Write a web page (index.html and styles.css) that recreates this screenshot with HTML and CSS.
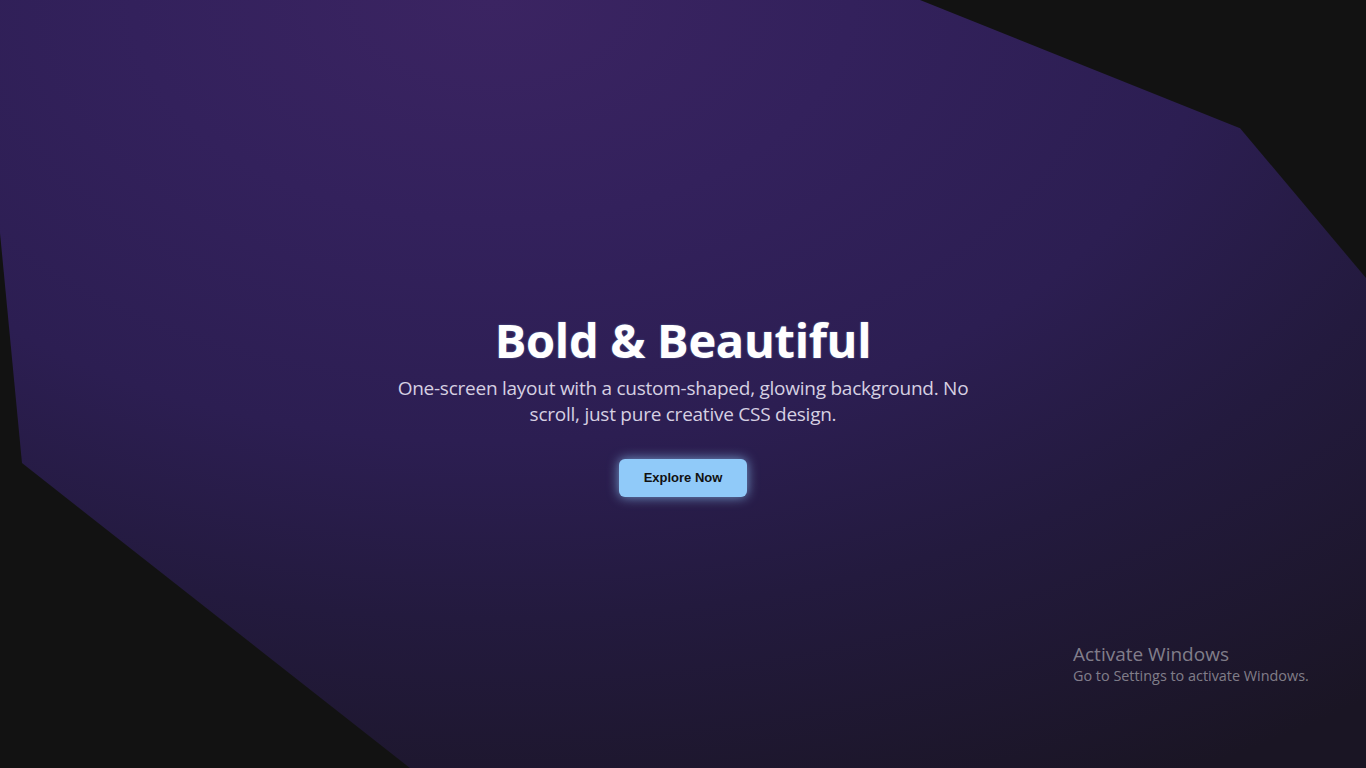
FILE: index.html
```html
<!DOCTYPE html>
<html lang="en">
<head>
<meta charset="utf-8">
<title>Bold &amp; Beautiful</title>
<link rel="stylesheet" href="styles.css">
</head>
<body>
<div class="shape"></div>
<main class="hero">
  <h1 class="title">Bold &amp; Beautiful</h1>
  <p class="lead">One-screen layout with a custom-shaped, glowing background. No scroll, just pure creative CSS design.</p>
  <button class="cta">Explore Now</button>
</main>
<div class="watermark">
  <div class="wm-title">Activate Windows</div>
  <div class="wm-sub">Go to Settings to activate Windows.</div>
</div>
</body>
</html>
```
FILE: styles.css
```css
html, body {
  margin: 0;
  height: 100%;
}
body {
  background: #121212;
  overflow: hidden;
  font-family: "Open Sans", "Noto Sans", sans-serif;
  color: #fff;
  position: relative;
}
.shape {
  position: absolute;
  inset: 0;
  background: radial-gradient(ellipse 105% 115% at 36% 0%, #3b2462 0%, #33215c 25%, #2c1e52 50%, #231a3e 70%, #1a1524 100%);
  clip-path: polygon(0 0, 67.35% 0, 90.78% 16.7%, 100% 36.2%, 100% 100%, 30.01% 100%, 1.61% 60.3%, 0 30.3%);
}
.hero {
  position: relative;
  height: 100%;
  display: flex;
  flex-direction: column;
  align-items: center;
  justify-content: center;
  text-align: center;
  padding-top: 36px;
  box-sizing: border-box;
}
.title {
  margin: 0;
  font-size: 47px;
  font-weight: 700;
  line-height: 64px;
  letter-spacing: -0.3px;
  text-shadow: 0 0 2px rgba(144, 202, 249, 0.5);
}
.lead {
  margin: 3px 0 0;
  max-width: 600px;
  font-size: 19px;
  line-height: 26px;
  letter-spacing: -0.25px;
  color: #d6d0e2;
}
.cta {
  margin-top: 32px;
  width: 128px;
  height: 38px;
  border: none;
  border-radius: 6px;
  background: #90caf9;
  color: #111;
  font-family: "Liberation Sans", Arial, sans-serif;
  font-weight: 700;
  font-size: 13px;
  box-shadow: 0 0 12px rgba(144, 202, 249, 0.75);
  cursor: pointer;
}
.watermark {
  position: absolute;
  left: 1073px;
  top: 642px;
  color: rgba(255, 255, 255, 0.45);
  font-family: "Open Sans", "Noto Sans", sans-serif;
}
.wm-title {
  font-size: 19px;
  line-height: 24px;
}
.wm-sub {
  font-size: 14.4px;
  line-height: 20px;
}
```
